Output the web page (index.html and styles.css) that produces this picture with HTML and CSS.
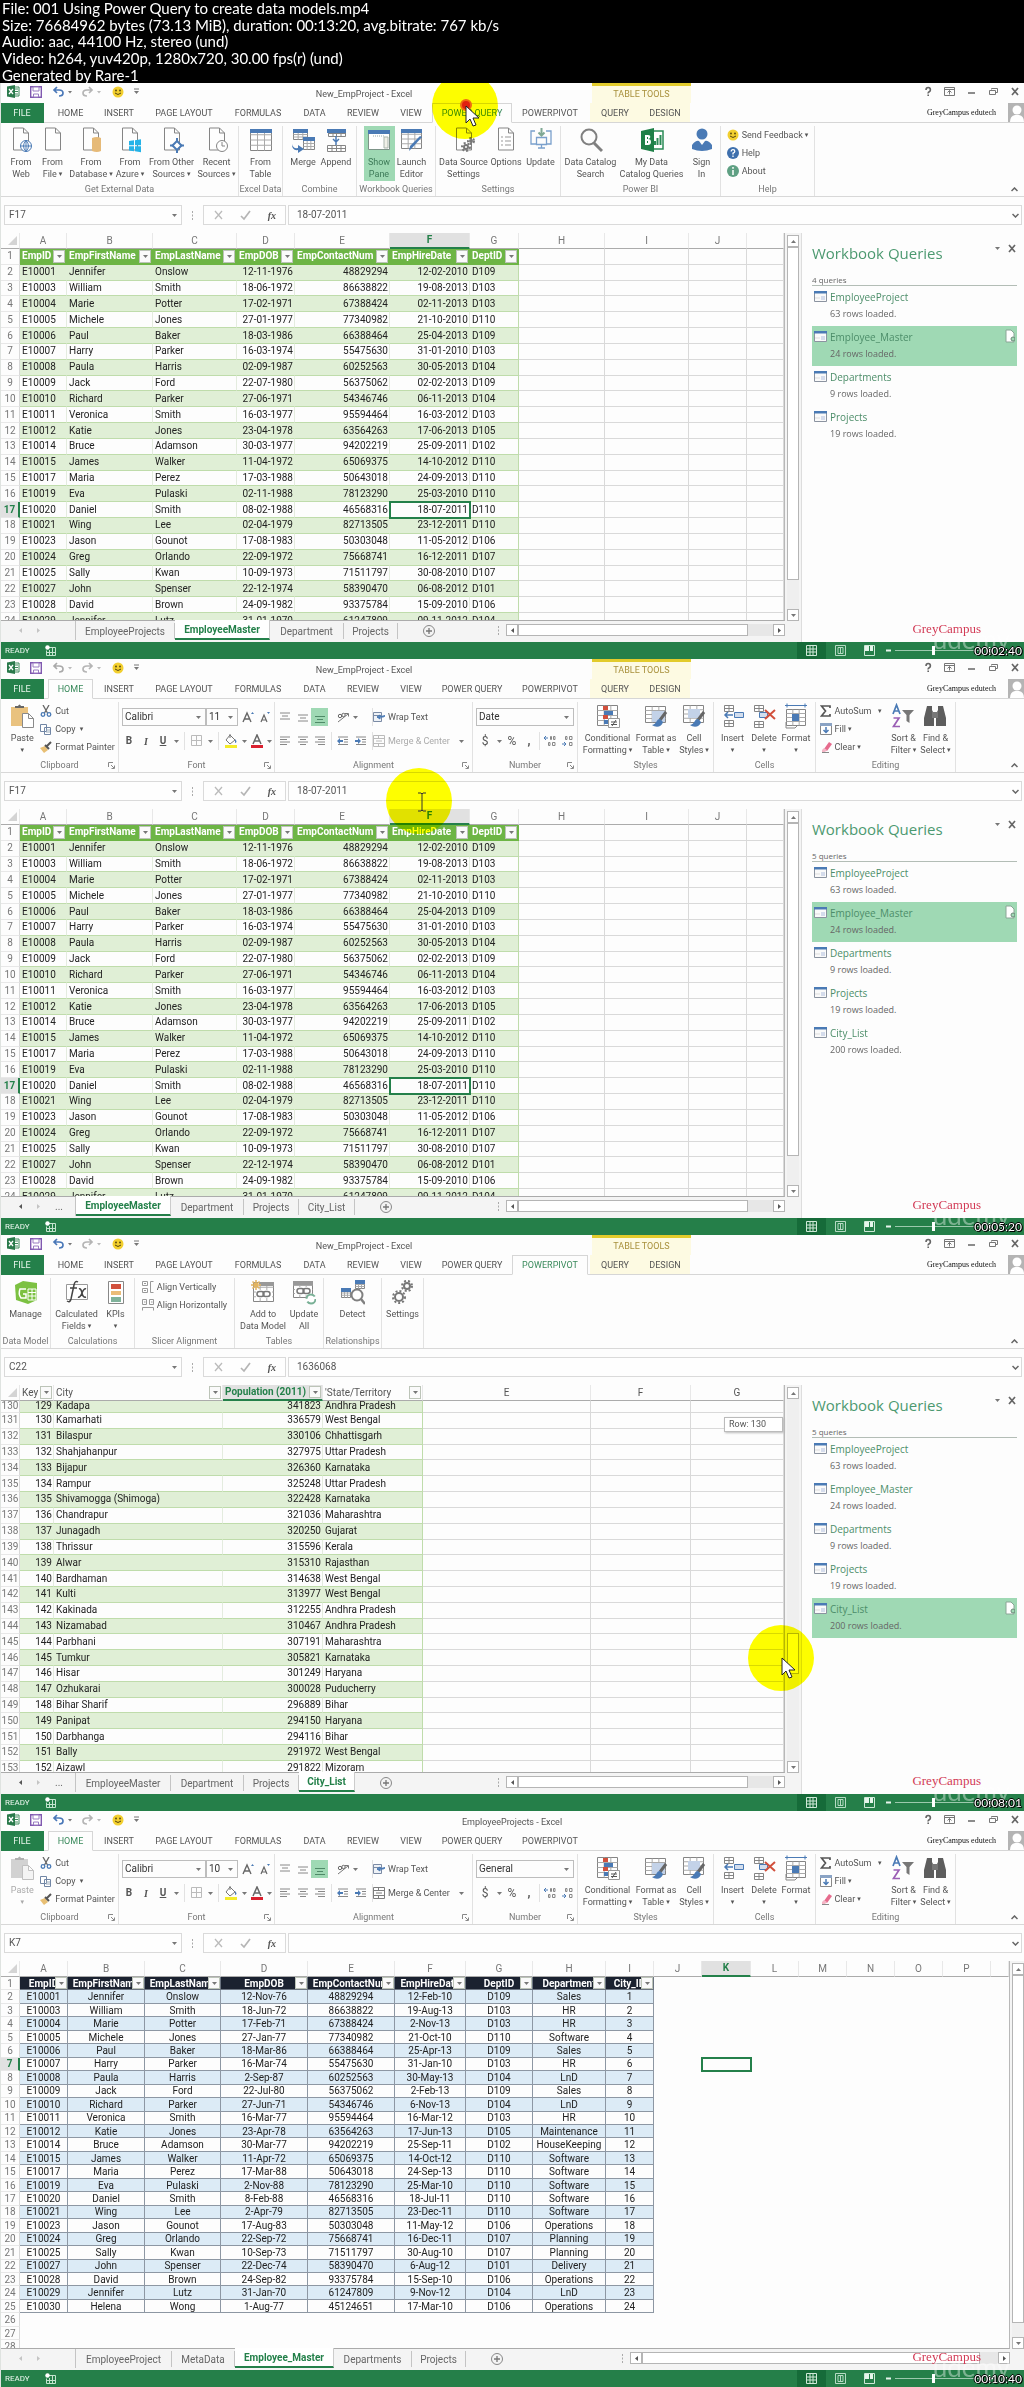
FILE: index.html
```html
<!DOCTYPE html>
<html lang="en">
<head>
<meta charset="utf-8">
<meta name="viewport" content="width=device-width, initial-scale=1">
<title>001 Using Power Query to create data models.mp4</title>
<link rel="stylesheet" href="styles.css">
</head>
<body>
<header class="file-info">
  <p>File: 001 Using Power Query to create data models.mp4</p>
  <p>Size: 76684962 bytes (73.13 MiB), duration: 00:13:20, avg.bitrate: 767 kb/s</p>
  <p>Audio: aac, 44100 Hz, stereo (und)</p>
  <p>Video: h264, yuv420p, 1280x720, 30.00 fps(r) (und)</p>
  <p>Generated by Rare-1</p>
</header>
<main id="frames"></main>
<script src="app.js"></script>
</body>
</html>
```
FILE: styles.css
```css
* { box-sizing: border-box; }
body {
  margin: 0;
  background: #fdfdfd;
  color: #555;
  font: 9px/12px Roboto, "Liberation Sans", sans-serif;
}
button, input, select { font: inherit; color: inherit; margin: 0; padding: 0; border: 0; background: none; }
p, h2, ul { margin: 0; padding: 0; }
ul { list-style: none; }
a { color: inherit; text-decoration: none; }
svg { display: block; flex: none; }

/* media summary */
.file-info {
  display: grid;
  grid-auto-rows: 1fr;
  align-items: center;
  min-height: 83px;
  padding-left: 2px;
  background: #000;
  color: #fff;
  font: 15px/16px Lato, sans-serif;
}

/* one captured window */
.frame { position: relative; overflow: hidden; border-left: 1px solid #dfe3e0; }

/* title row */
.titlebar { display: flex; height: 20px; }
.qat { display: flex; align-items: center; width: 135px; padding: 0 0 3px 6px; }
.qat .ico-xl { margin-right: 10px; }
.qat .ico-save { margin-right: 10px; }
.qat .undo { margin-right: 9px; }
.qat .smile { margin: 0 10px 0 11px; }
.qat button, .win button { display: flex; align-items: center; }
.doc-title { flex: 1; text-align: center; line-height: 22px; }
.tools-title {
  width: 99px; border-top: 3px solid #e2cb2c; background: #fdfae2; color: #a8903c;
  text-align: center; line-height: 17px;
}
.win { display: flex; justify-content: flex-end; align-items: center; gap: 11px; width: 333px; padding: 0 4px 3px 0; }
.no-tools .win { width: 136px; }

/* ribbon tabs */
.tabs { display: flex; height: 20px; border-bottom: 1px solid #d6d6d6; }
.tab { height: 20px; text-align: center; line-height: 20px; }
.tab.file { background: #24804a; color: #e8f5ec; margin-right: 4px; margin-left: -1px; }
.tab.active { border: 1px solid #d6d6d6; border-bottom-color: #fdfdfd; color: #3a8a5c; line-height: 18px; background: #fdfdfd; }
.tab.tool { background: #fdfae2; height: 19px; }
.tab.gap { margin-right: 2px; }
.user { display: flex; align-items: flex-start; margin-left: auto; gap: 12px; font: 8px/20px "Liberation Serif", serif; color: #111; }

/* ribbon body */
.ribbon { display: flex; position: relative; height: 74px; border-bottom: 1px solid #d8d8d8; }
.group { display: flex; flex-direction: column; border-right: 1px solid #e2e2e2; margin: 3px 0 0; }
.group-body { display: flex; flex: 1; justify-content: center; }
.group-name { position: relative; height: 13px; text-align: center; color: #777; white-space: nowrap; }
.group-name svg { position: absolute; right: 3px; bottom: 3px; }
.big { display: flex; flex-direction: column; align-items: center; white-space: nowrap; padding-top: 1px; height: 55px; }
.big svg { margin-bottom: 3px; }
.big span { display: block; }
.big.on { background: #9fd9b4; color: #3d7a58; }
.dd::after { content: "\25BE"; font: 7px/7px "DejaVu Sans", sans-serif; padding-left: 2px; vertical-align: 1px; }
.dd.only::after { padding: 0; }
.dim { color: #aaa; }
.list { display: flex; flex-direction: column; align-items: flex-start; }
.row { display: flex; align-items: center; height: 18px; gap: 3px; white-space: nowrap; }
.lines { display: flex; flex-direction: column; gap: 6px; padding-top: 6px; flex: 1; }
.tools { display: flex; align-items: center; height: 18px; white-space: nowrap; }
.tools > * { flex: none; display: flex; justify-content: center; align-items: center; }
.tools .hl { background: #9fd9b4; height: 18px; }
.tools .sep { align-self: stretch; border-left: 1px solid #e2e2e2; }
.tools .left { justify-content: flex-start; gap: 3px; }
.combo { position: relative; height: 18px; border: 1px solid #bdbdbd; }
.combo select { width: 100%; height: 16px; padding-left: 2px; appearance: none; color: #333; font-size: 10px; }
.combo svg { position: absolute; right: 4px; }
.collapse { position: absolute; right: 6px; bottom: 4px; }
.b { font-weight: 700; font-size: 10px; }
.i { font: italic 700 10px "Liberation Serif", serif; }
.u { font-weight: 700; font-size: 10px; text-decoration: underline; }
.money { font-size: 12px; }

/* formula bar */
.fbar { display: flex; align-items: center; height: 36px; padding: 8px 2px; font-size: 10px; }
.fbar > * { height: 20px; }
.box { display: flex; align-items: center; border: 1px solid #dadada; background: #fefefe; }
.namebox { width: 178px; padding: 0 4px; margin-left: 1px; }
.namebox input { flex: 1; min-width: 0; }
.grip { width: 21px; display: flex; justify-content: center; align-items: center; }
.fx { width: 83px; justify-content: space-between; padding: 0 9px; margin-right: 2px; }
.formula { flex: 1; padding: 0 2px 0 8px; }
.formula input { flex: 1; min-width: 0; }

/* worksheet area */
.work { display: flex; }
.sheet { flex: 1; min-width: 0; display: flex; flex-direction: column; }
.view { display: flex; height: 388px; }
.grid { flex: 1; min-width: 0; overflow: hidden; border-bottom: 1px solid #ababab; border-right: 1px solid #b8b8b8; }
table { table-layout: fixed; width: 100%; border-collapse: separate; border-spacing: 0; font-size: 10px; line-height: 12px; color: #222; }
table.std { height: 396px; }
table.city { height: 392px; }
table.blue { height: 393px; }
td, th { padding: 0 2px; overflow: hidden; white-space: nowrap; text-align: left; font-weight: 400; border-right: 1px solid #d9d9d9; border-bottom: 1px solid #d9d9d9; }
th { position: relative; }
thead tr { height: 16px; }
thead th { text-align: center; color: #777; border-right-color: #e8e8e8; border-bottom-color: #ababab; }
thead th.sel { background: #e1e1e1; color: #24804a; font-weight: 700; border-bottom: 2px solid #24804a; }
.corner svg { margin-left: auto; }
tbody th { text-align: center; color: #777; border-bottom-color: #e8e8e8; padding: 0; }
tbody th.sel { background: #e1e1e1; color: #24804a; font-weight: 700; border-right: 2px solid #24804a; }
td.num { text-align: right; padding-right: 1px; }
td.t { border-bottom-color: #bfdcab; border-right-color: #e4ecdf; }
td.t.last { border-right-color: #bfdcab; }
tr.band td.t { background: #e0efd6; border-right-color: #e0efd6; }
tr.band td.t.last { border-right-color: #bfdcab; }
td.t.head { position: relative; background: #6db545; color: #fff; font-weight: 700; border-color: #6db545; }
td.cell-on { outline: 2px solid #24804a; outline-offset: -1px; overflow: visible; position: relative; }
.filter {
  position: absolute; right: 1px; top: 1px; bottom: 1px; width: 12px;
  display: flex; align-items: center; justify-content: center;
  border: 1px solid #bcc4b8; background: #fafafa;
}
.city thead th { text-align: left; color: #555; }
.city thead th.mid { text-align: center; }
.city thead th.sel { color: #24804a; }
.city tr.cut { height: 12px; }
.city tr.cut td, .city tr.cut th { line-height: 9px; vertical-align: top; }
.blue td { border-color: transparent; line-height: 11px; }
.blue tbody th { line-height: 11px; }
.blue td.t { text-align: center; border-color: #8d97a3; }
.blue tr.band td.t { background: #dcebf6; border-color: #8d97a3; }
.blue td.t.head { background: #1b2230; border-color: #6b7480; }
.blue .filter { right: 0; top: 0; bottom: 0; }
.tip { position: absolute; left: 723px; top: 182px; width: 59px; height: 15px; border: 1px solid #bbb; background: #fff; box-shadow: 1px 1px 2px #bbb; padding-left: 4px; line-height: 13px; }

.vscroll { display: flex; flex-direction: column; width: 16px; padding: 2px 2px 0; background: #f4f4f4; }
.no-pane .vscroll { width: 14px; padding: 2px 0 0 2px; }
.vscroll button, .hscroll button { display: flex; align-items: center; justify-content: center; width: 12px; height: 12px; border: 1px solid #b5b5b5; background: #fff; }
.vtrack { flex: 1; display: flex; flex-direction: column; background: #efefef; }
.vthumb { border: 1px solid #b5b5b5; background: #fff; height: 333px; }
.low .vthumb { margin-top: 234px; height: 41px; }
.no-pane .vthumb { height: 348px; }

/* sheet tabs */
.sheetbar { display: flex; align-items: flex-start; height: 21px; background: #f4f4f4; font-size: 10px; color: #666; }
.nav { display: flex; align-items: center; width: 75px; height: 19px; padding-left: 18px; gap: 15px; border-right: 1px solid #c4c4c4; }
.nav span { line-height: 10px; }
.stab { height: 16px; margin-top: 2px; text-align: center; line-height: 15px; border-right: 1px solid #c4c4c4; white-space: nowrap; }
.stab.on { height: 20px; margin-top: -1px; line-height: 19px; background: #fff; color: #24804a; font-weight: 700; border-right-color: #ccc; border-bottom: 2px solid #24804a; }
.plus { margin: 3px 0 0 24px; }
.hscroll { display: flex; align-items: center; width: 310px; margin-left: auto; padding: 3px 16px 0 0; }
.hscroll .grip { width: 15px; }
.htrack { flex: 1; background: #e7e7e7; }
.hthumb { display: block; width: 90%; height: 12px; border: 1px solid #b5b5b5; background: #fff; }
.no-pane .hscroll { width: 409px; padding-right: 14px; }
.no-pane .hthumb { width: 95%; }

/* query pane */
.pane { width: 223px; padding: 10px 7px 0 10px; border-left: 1px solid #ddd; background: #fdfdfd; font-family: "Open Sans", sans-serif; }
.pane-head { display: flex; align-items: flex-start; justify-content: space-between; }
.pane-head h2 { font: 400 15px/20px "Open Sans", sans-serif; color: #4c9970; }
.pane-head div { display: flex; gap: 7px; padding: 1px 0 0; align-items: center; }
.pane .count { margin-top: 11px; border-bottom: 1px solid #b3bdb6; line-height: 11px; font-size: 8px; color: #666; }
.query { display: flex; gap: 3px; height: 40px; padding: 3px 2px 0; }
.query.on { background: #9fd9b4; }
.query .txt { flex: 1; }
.query a { display: block; font-size: 10px; line-height: 16px; color: #4c8d69; }
.query p { font-size: 9px; line-height: 18px; color: #666; }
.query svg { margin-top: 2px; }
.query .peek { margin-top: 0; }

/* status bar */
.status { display: flex; align-items: center; height: 17px; margin-left: -1px; padding-left: 5px; background: #257f49; color: #eef8f1; font-size: 8px; }
.status .rec { margin-left: 15px; }
.views { display: flex; align-items: center; margin-left: auto; height: 17px; }
.views button { display: flex; align-items: center; justify-content: center; width: 29px; height: 17px; }
.views button.on { background: #166b39; }
.zoom { display: flex; align-items: center; gap: 3px; margin: 0 31px 0 2px; }
.zoom input { appearance: none; width: 88px; height: 10px; }
.zoom input::-webkit-slider-runnable-track { height: 1px; background: #9cc9ad; }
.zoom input::-webkit-slider-thumb { appearance: none; width: 3px; height: 9px; margin-top: -4px; background: #fff; }

/* overlays on the captured picture */
.brand { position: absolute; right: 43px; bottom: 22px; font: 13px/16px "Liberation Serif", serif; color: #d23a55; }
.mark { position: absolute; right: 14px; bottom: 4px; font: 26px/32px Lato, sans-serif; color: rgba(255,255,255,.4); }
.time { position: absolute; right: 2px; bottom: 1px; font: 12px/14px Lato, sans-serif; color: #fff; text-shadow: 1px 1px 0 #000, -1px 0 0 #000, 0 -1px 0 #000, 1px 0 0 #000; }
.spot { position: absolute; width: 66px; height: 66px; border-radius: 50%; background: #ff0; mix-blend-mode: multiply; }
.pointer { position: absolute; }
.spot.s1 { left: 431px; top: -10px; }
.pointer.s1 { left: 457px; top: 15px; }
.spot.s2 { left: 385px; top: 109px; }
.pointer.s2 { left: 416px; top: 133px; }
.spot.s3 { left: 747px; top: 390px; }
.pointer.s3 { left: 773px; top: 415px; }
```
FILE: app.js
```js
// Icon drawings: [width, height, viewBox, markup]
const G = '#858585', B = '#4a7ab5';
const doc = `<path d="M4.500 1h10l5 5v17h-15zM14.500 1v5h5" fill="#fefefe" stroke="${G}"/>`;
const table = (x, y, w, h) => `<path d="M${x} ${y}h${w}v${h}h-${w}z" fill="#fff" stroke="${G}"/><path d="M${x} ${y + h / 4}h${w}M${x} ${y + h / 2}h${w}M${x} ${y + h * 3 / 4}h${w}M${x + w / 3} ${y}v${h}M${x + w * 2 / 3} ${y}v${h}" stroke="#aaa"/>`;
const cap = (x, y, w) => `<path d="M${x} ${y}h${w}v4h-${w}z" fill="${B}"/>`;
const box = (x, y) => `<path d="M${x} ${y}h9v6h-9zM${x} ${y + 3}h9M${x + 4.5} ${y}v6" fill="#fff" stroke="${G}"/>`;
const bars = (c, a) => a.map(([x, w], i) => `<path d="M${x} ${2 + i * 3}h${w}" stroke="${c}"/>`).join('');
const big = s => [24, 26, '0 0 24 26', s], small = s => [12, 12, '0 0 12 12', s];
const smiley = '<circle cx="6" cy="6" r="5.500" fill="#f2cf2f"/><circle cx="4" cy="4.500" r=".9" fill="#54430e"/><circle cx="8" cy="4.500" r=".9" fill="#54430e"/><path d="M3 7q3 3 6 0" fill="none" stroke="#54430e"/>';
const brush = `<path d="M22 9l-6 8" stroke="#666" stroke-width="3"/><path d="M16 16c-4 0-3 5-8 6 4 3 10 2 11-3z" fill="${B}"/>`;
const gear = (x, y, r) => `<circle cx="${x}" cy="${y}" r="${r}" fill="none" stroke="#777" stroke-width="2"/><circle cx="${x}" cy="${y}" r="${r + 2}" fill="none" stroke="#777" stroke-width="2" stroke-dasharray="2 2"/>`;
const ICON = {
  xl: [13, 13, '0 0 13 13', '<path d="M6 2h6v9H6z" fill="#fff" stroke="#3c8a5a"/><path d="M8 4h3M8 6.500h3M8 9h3" stroke="#3c8a5a"/><path d="M0 1.500L8 0v13L0 11.500z" fill="#2a7a4b"/><path d="M2 4l4 5M6 4L2 9" stroke="#fff" stroke-width="1.300"/>'],
  save: [12, 12, '0 0 12 12', '<path d="M.7.7h10.600v10.600H.7z" fill="#fff" stroke="#8059b0" stroke-width="1.400"/><path d="M3 1h6v4H3zM3.500 8h5v3h-5z" fill="#fff" stroke="#9a7cc2"/>'],
  undo: [20, 12, '0 0 20 12', '<path d="M5 1L2 4l3 3M2 4h5q4 0 4 3t-4 3" fill="none" stroke="#4a78b8" stroke-width="1.700"/><path d="M16 5h4l-2 2.500z" fill="#777"/>'],
  undoOff: [20, 12, '0 0 20 12', '<path d="M5 1L2 4l3 3M2 4h5q4 0 4 3t-4 3" fill="none" stroke="#aaa" stroke-width="1.700"/><path d="M16 5h4l-2 2.500z" fill="#bbb"/>'],
  redo: [20, 12, '0 0 20 12', '<path d="M8 1l3 3-3 3M11 4H6Q2 4 2 7t4 3" fill="none" stroke="#b5b5b5" stroke-width="1.700"/><path d="M16 5h4l-2 2.500z" fill="#bbb"/>'],
  smile: small(smiley),
  more: [5, 7, '0 0 5 7', '<path d="M0 1h5" stroke="#777"/><path d="M0 3h5L2.500 6z" fill="#777"/>'],
  help: [10, 11, '0 0 10 11', '<path d="M3 4q0-2.500 2.200-2.500T7.400 4q0 1.200-1.200 1.800T5.200 7.500M5.200 8.500v1.500" fill="none" stroke="#666" stroke-width="1.600"/>'],
  full: [11, 9, '0 0 11 9', '<path d="M.5.5h10v8H.5zM.5 2.500h10M5.500 7.500v-4M3.500 5.500l2-2 2 2" fill="none" stroke="#777"/>'],
  min: [11, 9, '0 0 11 9', '<path d="M2 6h7" stroke="#666" stroke-width="1.500"/>'],
  max: [11, 9, '0 0 11 9', '<path d="M3.500 2.500v-1h6v4h-2M1.500 3.500h6v4h-6z" fill="none" stroke="#777"/>'],
  close: [10, 9, '0 0 10 9', '<path d="M2 1l6 7M8 1L2 8" stroke="#666" stroke-width="1.700"/>'],
  avatar: [16, 19, '0 0 16 19', '<path d="M0 0h16v19H0z" fill="#b4b4b4"/><circle cx="9" cy="7" r="4.500" fill="#fff"/><path d="M2 19q0-6 5-7h4q5 1 5 7z" fill="#fff"/>'],
  caret: [5, 3, '0 0 5 3', '<path d="M0 0h5L2.500 3z" fill="#777"/>'],
  caretUp: [5, 3, '0 0 5 3', '<path d="M0 3h5L2.500 0z" fill="#777"/>'],
  left: [3, 5, '0 0 3 5', '<path d="M3 0v5L0 2.500z" fill="#555"/>'],
  right: [3, 5, '0 0 3 5', '<path d="M0 0v5l3-2.500z" fill="#555"/>'],
  leftOff: [3, 5, '0 0 3 5', '<path d="M3 0v5L0 2.500z" fill="#c4c4c4"/>'],
  rightOff: [3, 5, '0 0 3 5', '<path d="M0 0v5l3-2.500z" fill="#c4c4c4"/>'],
  up: [7, 5, '0 0 7 5', '<path d="M.5 4l3-3 3 3" fill="none" stroke="#666" stroke-width="1.500"/>'],
  down: [7, 5, '0 0 7 5', '<path d="M.5 1l3 3 3-3" fill="none" stroke="#666" stroke-width="1.500"/>'],
  launch: [7, 7, '0 0 7 7', '<path d="M.5 5V.5H5M3 3l3 3M6.500 3.500v3h-3" fill="none" stroke="#888"/>'],
  dots: [2, 9, '0 0 2 9', '<path d="M0 0h1v2H0zM0 3.500h1v2H0zM0 7h1v2H0z" fill="#aaa"/>'],
  cancel: small('<path d="M2 2l7 8M9 2L2 10" stroke="#bbb" stroke-width="1.300"/>'),
  check: small('<path d="M1 7l3 3 6-8" fill="none" stroke="#b5b5b5" stroke-width="1.700"/>'),
  corner: [9, 9, '0 0 9 9', '<path d="M9 0v9H0z" fill="#d4d4d4"/>'],
  add: [14, 14, '0 0 14 14', '<circle cx="7" cy="7" r="5.500" fill="none" stroke="#888"/><path d="M4 7h6M7 4v6" stroke="#777" stroke-width="1.300"/>'],
  rec: [11, 12, '0 0 11 12', '<path d="M3.500 2.500h7v8h-9v-5M1.500 7.500h9M4.500 5v5M7.500 3v7" fill="none" stroke="#c4e4cf"/><circle cx="2.500" cy="2.500" r="2.200" fill="#fff"/>'],
  vGrid: [11, 11, '0 0 11 11', '<path d="M.5.5h10v10H.5zM.5 4h10M.5 7h10M4 .5v10M7 .5v10" fill="none" stroke="#cfe9d8"/>'],
  vPage: [11, 11, '0 0 11 11', '<path d="M.5.5h10v10H.5zM3 2.500h5v6H3zM5.500 2.500v6" fill="none" stroke="#b5dac3"/>'],
  vBreak: [11, 11, '0 0 11 11', '<path d="M.5.5h10v10H.5z" fill="none" stroke="#cfe9d8"/><path d="M1 1h4v5H1zM6 1h3v5H6z" fill="#e5f5eb"/>'],
  minus: [6, 3, '0 0 6 3', '<path d="M0 1.500h5" stroke="#e8f5ec" stroke-width="2"/>'],
  plus: [7, 7, '0 0 7 7', '<path d="M0 3.500h7M3.500 0v7" stroke="#fff" stroke-width="1.500"/>'],
  query: [13, 12, '0 0 13 12', `<path d="M.5 1.500h12v9H.5z" fill="#fafafa" stroke="#8b93a0"/><path d="M0 0h13v2.500H0z" fill="${B}"/><path d="M7 5h4v4H7z" fill="#d5dcec"/><path d="M1 7h5" stroke="#ddd"/>`],
  peek: [10, 14, '0 0 10 14', '<path d="M1 1h5l3 3v9H1z" fill="#fff" stroke="#8aa596"/><circle cx="8" cy="10" r="2" fill="#9fd9b4" stroke="#6d8a7a"/>'],
  // Power Query ribbon
  web: big(doc + `<circle cx="17" cy="19" r="5.500" fill="#fff" stroke="${B}"/><path d="M11.500 19h11M17 13.500v11M17 13.500q-5 5.500 0 11q5-5.500 0-11" fill="none" stroke="${B}"/>`),
  file: big(doc),
  database: big(doc + '<path d="M13 11q5-2 9 0v13q-4 2-9 0z" fill="#e6ba78"/>'),
  azure: big(doc + '<path d="M11 14l5-.7v5h-5zM17 13.200l6-1v6h-6zM11 19.200h5v5l-5-.7zM17 19.200h6v6l-6-1z" fill="#25b3e8"/>'),
  other: big(doc + `<path d="M17 14l4.500 4.500L17 23l-4.500-4.500z" fill="#fff" stroke="${B}" stroke-width="2"/><path d="M17 11v4M17 22v4M10 18.500h4M20 18.500h4" stroke="${B}" stroke-width="2"/>`),
  recent: big(doc + `<circle cx="17" cy="19" r="5.500" fill="#fff" stroke="${G}"/><path d="M17 15v4h3" fill="none" stroke="${G}"/>`),
  table: big(table(1.5, 2.5, 21, 21) + cap(1, 2, 22)),
  merge: big(table(2.5, 2.5, 14, 10) + cap(2, 2, 15) + table(12.5, 10.5, 11, 12) + cap(12, 10, 12) + `<path d="M1 17q1 5 6 4v-3l6 4-6 4v-3q-6 1-6-6z" fill="${B}"/>`),
  append: big(box(4.5, 3.5) + box(12.5, 3.5) + cap(3, 2, 19) + `<path d="M12 9v9M9 12l3 3 3-3" fill="none" stroke="${B}" stroke-width="1.500"/>` + box(3.5, 18.5) + box(12.5, 18.5)),
  pane: big(`<path d="M1.500 3.500h21v19h-21z" fill="#fff" stroke="#7d9488"/>` + cap(1, 3, 22) + '<path d="M17 10h4v11h-4z" fill="#f0f0e8" stroke="#a9b5ad"/><path d="M6 9h12" stroke="#9aa" stroke-dasharray="1 1"/>'),
  editor: big(table(1.5, 2.5, 20, 19) + cap(1, 2, 21) + `<path d="M22 10L12 21l-3 3 1-5 10-10z" fill="${B}"/>`),
  source: big(doc + gear(14, 20, 2) + gear(19, 14, 1)),
  options: big(doc + '<path d="M7 10h2M11 10h6M7 14h2M11 14h6M7 18h2M11 18h6" stroke="#999"/>'),
  update: big(`<path d="M6 4H2v13h5M17 4h5v13h-5M7.500 10.500h10v7h-10zM9 21h7M12.500 18v3" fill="none" stroke="#7aa0cc" stroke-width="1.300"/><path d="M12.500 1v7M9.500 5.500l3 3 3-3" fill="none" stroke="#7fa894" stroke-width="2"/>`),
  search: big('<circle cx="10" cy="10" r="7.500" fill="none" stroke="#808080" stroke-width="2"/><path d="M15 16l8 8" stroke="#808080" stroke-width="3"/>'),
  bi: big('<path d="M12 4h11v18H12z" fill="#fff" stroke="#2a8a55" stroke-width="1.500"/><path d="M15 18v-4M17.500 18v-7M20.500 18V8" stroke="#2a8a55" stroke-width="2"/><path d="M1 4l13-3v24L1 22z" fill="#1f8048"/><path d="M5 8h3q3 0 2 3-1 1-2 1 3 0 3 3t-3 3H5zM7 10v2h1v-2zM7 14v2h1v-2z" fill="#fff"/>'),
  sign: big(`<circle cx="12" cy="7" r="5.500" fill="${B}"/><path d="M2 18q4-5 7-4l3 4 3-4q3-1 7 4v4q-10 4-20 0z" fill="${B}"/>`),
  helpBlue: small(`<circle cx="6" cy="6" r="6" fill="#3f70ad"/><path d="M4.200 4.500q0-1.800 1.800-1.800t1.800 1.600Q7.800 5.500 6 6.200V7.500M6 8.500V10" fill="none" stroke="#fff" stroke-width="1.300"/>`),
  about: small('<circle cx="6" cy="6" r="6" fill="#5fa083"/><path d="M6 2v1.700M6 5v5" stroke="#fff" stroke-width="1.500"/>'),
  // Home ribbon
  paste: big('<path d="M1 4h17v19H1z" fill="#e9c27f"/><path d="M5 5V3h3q1.500-3 3 0h3v2z" fill="#666"/><path d="M12.500 10.500h6l5 5v9h-11zM18.500 10.500v5h5" fill="#fff" stroke="#8a8a8a"/>'),
  pasteOff: big('<path d="M1 4h17v19H1z" fill="#d2d2d2"/><path d="M5 5V3h3q1.500-3 3 0h3v2z" fill="#b0b0b0"/><path d="M12.500 10.500h6l5 5v9h-11zM18.500 10.500v5h5" fill="#f4f4f4" stroke="#c0c0c0"/>'),
  cut: small(`<path d="M3 0l4.500 8M9 0L4.500 8" stroke="#666" stroke-width="1.300"/><circle cx="3" cy="9.500" r="1.800" fill="none" stroke="${B}" stroke-width="1.300"/><circle cx="9" cy="9.500" r="1.800" fill="none" stroke="${B}" stroke-width="1.300"/>`),
  copy: small('<path d="M.5 1.500h6v7h-6zM4.500 4.500h6v7h-6z" fill="#fff" stroke="#7186a5"/><path d="M6 7h4M6 9h4" stroke="#9ab"/>'),
  painter: small('<path d="M0 7l5-2 3 4-4 3z" fill="#e8bf74"/><path d="M5 4l4 4M7 5l4-4" stroke="#555" stroke-width="2"/>'),
  bigA: [14, 14, '0 0 14 14', '<path d="M2 12L6 3l4 9M3.500 9h5" fill="none" stroke="#666" stroke-width="1.400"/><path d="M10 4l1.500-2L13 4z" fill="#4a7ab5"/>'],
  smallA: [14, 14, '0 0 14 14', '<path d="M3 12l3-7 3 7M4 10h4" fill="none" stroke="#666" stroke-width="1.200"/><path d="M9 2h3l-1.500 2z" fill="#4a7ab5"/>'],
  border: small('<path d="M.5.5h10v10H.5zM5.500.5v10M.5 5.500h10" fill="none" stroke="#bbb"/>'),
  fill: [14, 14, '0 0 14 14', '<path d="M6 1l5 5-5 4-4-4zM6 0v4" fill="#fff" stroke="#777"/><path d="M11 5q3 3 0 4z" fill="#4a7ab5"/><path d="M1 11h12v3H1z" fill="#f4ec2a"/>'],
  fontA: [14, 14, '0 0 14 14', '<path d="M3 10L7 1l4 9M4.500 7h5" fill="none" stroke="#666" stroke-width="1.500"/><path d="M1 11h12v3H1z" fill="#d9202f"/>'],
  top: small(bars('#888', [[1, 10], [3, 6], [1, 10]])),
  mid: small('<path d="M1 4h10M3 7h6M1 10h10" stroke="#888"/>'),
  bot: small('<path d="M1 5.500h10M3 8.500h6M1 11.500h10" stroke="#4f8a68"/>'),
  orient: small('<path d="M1 11L11 3M8 2.500h3.500v3" stroke="#777" fill="none"/><circle cx="3" cy="5" r="1.700" fill="none" stroke="#666"/><circle cx="6.500" cy="4" r="1.700" fill="none" stroke="#666"/>'),
  al: small('<path d="M1 2h10M1 4.500h7M1 7h10M1 9.500h7" stroke="#888"/>'),
  ac: small('<path d="M1 2h10M3 4.500h6M1 7h10M3 9.500h6" stroke="#888"/>'),
  ar: small('<path d="M1 2h10M4 4.500h7M1 7h10M4 9.500h7" stroke="#888"/>'),
  outdent: small(`<path d="M1 2h10M7 4.500h4M7 7h4M1 9.500h10" stroke="#888"/><path d="M0 6l3-3v2h3v2H3v2z" fill="${B}"/>`),
  indent: small(`<path d="M1 2h10M7 4.500h4M7 7h4M1 9.500h10" stroke="#888"/><path d="M6 6L3 3v2H0v2h3v2z" fill="${B}"/>`),
  wrap: small(`<path d="M.5 1.500h8v9h-8zM.5 4.500h8" fill="#eef2f7" stroke="#7b8ba5"/><path d="M4 6h6q2 0 2-2M7 4v4L4 6z" fill="${B}" stroke="${B}"/>`),
  mergeC: small('<path d="M.5.5h11v11H.5zM.5 3.500h11M.5 8.500h11M5.500.5v3M5.500 8.500v3M3 6h6" fill="none" stroke="#7d7d7d"/>'),
  mergeOff: small('<path d="M.5.5h11v11H.5zM.5 3.500h11M.5 8.500h11M5.500.5v3M5.500 8.500v3M3 6h6" fill="none" stroke="#bbb"/>'),
  decUp: small(`<path d="M0 3h4M2 1L0 3l2 2" fill="none" stroke="${B}"/><path d="M6.500 1.500h1v3h-1zM9.500 1.500h1.500v3H9.500zM4.500 7.500H6v3H4.500zM8.500 7.500H11v3H8.500z" fill="none" stroke="#888"/>`),
  decDown: small(`<path d="M1 9h4M3 7l2 2-2 2" fill="none" stroke="${B}"/><path d="M4.500 1.500H6v3H4.500zM8.500 1.500H11v3H8.500zM8.500 7.500H11v3H8.500z" fill="none" stroke="#888"/>`),
  cond: big(table(1.5, 2.5, 20, 20) + `<path d="M7 3h5v4H7zM7 12h5v4H7z" fill="#d1503c"/><path d="M8 8h9v4H8zM8 17h4v4H8z" fill="${B}"/><path d="M12.500 15.500h11v9h-11z" fill="#fff" stroke="#999"/><path d="M15 19h6M15 21.500h6M20 17l-4 6" stroke="#555"/>`),
  fmtTable: big(table(1.5, 3.5, 20, 16) + '<path d="M8 8h13v11H8z" fill="#c3d2e8"/>' + brush),
  cell: big(table(1.5, 2.5, 20, 17) + '<path d="M6 6h12v9H6z" fill="#c3d2e8"/>' + brush),
  insert: big(box(3.5, 2.5) + box(3.5, 17.5) + `<path d="M13.500 9.500h9v5h-9z" fill="#d3deee" stroke="${B}"/><path d="M12 12H4M7 9l-3 3 3 3" fill="none" stroke="${B}" stroke-width="1.500"/>`),
  del: big(box(2.5, 2.5) + box(2.5, 18.5) + `<path d="M7.500 9.500h8v5h-8z" fill="#d3deee" stroke="${B}"/><path d="M13 7l10 9M23 7l-10 9" stroke="#d1503c" stroke-width="2"/>`),
  format: big(table(2.5, 6.5, 19, 16) + `<path d="M8 11h7v7H8z" fill="${B}"/><path d="M1 2.500h22M3 .5v4M21 .5v4" stroke="${B}"/><path d="M2 19v6h9l3-3" fill="none" stroke="#888"/>`),
  sum: small('<path d="M10 3V1H1.500l4 5-4 5H10V9" fill="none" stroke="#555" stroke-width="1.700"/>'),
  down2: small(`<path d="M.5.5h11v11H.5z" fill="#fff" stroke="#888"/><path d="M0 0h12v3H0z" fill="#8aa3c4"/><path d="M6 4v5M3.500 7L6 9.500 8.500 7" fill="none" stroke="${B}" stroke-width="1.500"/>`),
  erase: small('<path d="M4 8l5-7 3 2-5 7z" fill="#e66b8d"/><path d="M2 9l2-2 3 2-2 2H2z" fill="#f3b6c6"/><path d="M2 11.500h7" stroke="#888"/>'),
  sort: big(`<path d="M2 11l3.500-9L9 11M3.500 8h4.500" fill="none" stroke="${B}" stroke-width="1.700"/><path d="M2.500 15H8l-5.500 8.500H9" fill="none" stroke="#9b5fb5" stroke-width="1.700"/><path d="M11 7h12l-4.500 5v8l-3-2v-6z" fill="#777"/>`),
  find: big('<path d="M4 3h5v4l2 4v12H1v-8zM15 3h5l3 12v8H13V11l2-4z" fill="#5d5d5d"/><path d="M9 9h6v6H9z" fill="#777"/>'),
  // PowerPivot ribbon
  manage: big('<path d="M1 6l8-4 14 2v17l-9 4-12-4z" fill="#7cc142"/><path d="M12 10H6q-2 5 1 9h5v-4H9" fill="none" stroke="#fff" stroke-width="1.500"/><path d="M14 10h8v11h-8zM14 13.500h8M14 17h8M18 10v11" fill="#7cc142" stroke="#fff"/>'),
  calc: big('<path d="M1.500 5.500h21v15h-21z" fill="#fff" stroke="#999"/><path d="M13 3q-3-2-4 3L6 20q-1 4-4 2M5 9h7M14 10q2-1 3 4t4 4M21 10q-2-1-4 4t-4 4" fill="none" stroke="#444" stroke-width="1.500"/>'),
  kpi: big('<path d="M4.500 2.500h15v22h-15z" fill="#fff" stroke="#888"/><path d="M7 5h10v5H7z" fill="#d1503c"/><path d="M7 12h10v4H7z" fill="#eabc78"/><path d="M7 18h10v5H7z" fill="#7fb29a"/>'),
  alignV: small('<path d="M.5.5h5v4h-5zM.5 7.500h5v4h-5zM2 2.500h2M2 9.500h2M11.500.5h-3v11h3" fill="none" stroke="#999"/>'),
  alignH: small('<path d="M.5.5h4v5h-4zM7.500.5h4v5h-4zM2 3h1.500M9 3h1.500M.5 11.500v-3h11v3" fill="none" stroke="#999"/>'),
  addModel: big(table(2.5, 3.5, 20, 19) + cap(8, 3, 15).replace(B, '#999') + '<path d="M0 6h10M5 1v10M1.500 2.500l7 7M8.500 2.500l-7 7" stroke="#e3b45e" stroke-width="1.500"/><path d="M5 11h16v8H5z" fill="#fff"/><rect x="6" y="12.500" width="7" height="5" rx="2.500" fill="none" stroke="#777" stroke-width="1.500"/><rect x="12" y="12.500" width="7" height="5" rx="2.500" fill="none" stroke="#777" stroke-width="1.500"/>'),
  updAll: big(table(1.5, 2.5, 19, 16) + cap(1, 2, 20).replace(B, '#999') + '<path d="M3 8h17v8H3z" fill="#fff"/><rect x="5" y="9.500" width="7" height="5" rx="2.500" fill="none" stroke="#777" stroke-width="1.500"/><rect x="11" y="9.500" width="7" height="5" rx="2.500" fill="none" stroke="#777" stroke-width="1.500"/><circle cx="19" cy="20" r="4.500" fill="#fff" stroke="#79b096" stroke-width="2" stroke-dasharray="11 3"/>'),
  detect: big(table(.5, 9.5, 9, 9) + cap(0, 9, 10) + table(14.5, 1.5, 9, 8) + cap(14, 1, 10) + '<circle cx="16" cy="16" r="5.500" fill="#fff" stroke="#808080" stroke-width="2"/><path d="M20 20l4 5" stroke="#808080" stroke-width="2.500"/>'),
  settings: big(gear(16, 7, 3) + gear(8, 18, 4)),
  // pointers
  click: [24, 30, '0 0 24 30', '<circle cx="8" cy="7" r="6" fill="#f06a12"/><circle cx="8" cy="7" r="4" fill="#e02010"/><path d="M8 8v17l4-4 3 7 3-1-3-7h6z" fill="#fff" stroke="#222"/>'],
  beam: [10, 20, '0 0 10 20', '<path d="M1 1h3l1 1 1-1h3M1 19h3l1-1 1 1h3M5 2v16" fill="none" stroke="#333"/>'],
  arrow: [24, 30, '0 0 24 30', '<path d="M8 8v17l4-4 3 7 3-1-3-7h6z" fill="#fff" stroke="#222"/>']
};
const ic = (n, cls = '') => {
  const [w, h, vb, s] = ICON[n];
  return `<svg class="${cls}" width="${w}" height="${h}" viewBox="${vb}" aria-hidden="true">${s}</svg>`;
};

// Ribbon building blocks
const bigBtn = (icon, w, l1, l2 = '', cls = '') => {
  const arrow = l2.endsWith('~');
  const text = l2.replace('~', '');
  return `<button class="big ${cls}" style="width:${w}px">${ic(icon)}<span>${l1}</span>${l2 ? `<span class="${arrow ? 'dd' : ''} ${text ? '' : 'only'}">${text}</span>` : ''}</button>`;
};
const group = (w, name, body, launch) => `<section class="group" style="width:${w}px"><div class="group-body">${body}</div><div class="group-name">${name}${launch ? ic('launch') : ''}</div></section>`;
const line = (icon, text, arrow) => `<button class="row">${ic(icon)}<span class="${arrow ? 'dd' : ''}">${text}</span></button>`;
const tool = (w, inner, cls = '') => `<button class="${cls}" style="width:${w}px">${inner}</button>`;
const sep = w => `<span style="width:${w}px"></span><span class="sep"></span>`;
const combo = (w, label, value) => `<span class="combo" style="width:${w}px"><select aria-label="${label}"><option>${value}</option></select>${ic('caret')}</span>`;
const c = ic('caret');

const powerQuery = () =>
  group(238, 'Get External Data', bigBtn('web', 34, 'From', 'Web') + bigBtn('file', 29, 'From', 'File~') + bigBtn('database', 48, 'From', 'Database~') + bigBtn('azure', 30, 'From', 'Azure~') + bigBtn('other', 53, 'From Other', 'Sources~') + bigBtn('recent', 37, 'Recent', 'Sources~')) +
  group(44, 'Excel Data', bigBtn('table', 42, 'From', 'Table')) +
  group(74, 'Combine', bigBtn('merge', 33, 'Merge') + bigBtn('append', 33, 'Append')) +
  group(79, 'Workbook Queries', bigBtn('pane', 31, 'Show', 'Pane', 'on') + bigBtn('editor', 34, 'Launch', 'Editor')) +
  group(125, 'Settings', bigBtn('source', 52, 'Data Source', 'Settings') + bigBtn('options', 33, 'Options') + bigBtn('update', 36, 'Update')) +
  group(160, 'Power BI', bigBtn('search', 54, 'Data Catalog', 'Search') + bigBtn('bi', 68, 'My Data', 'Catalog Queries') + bigBtn('sign', 32, 'Sign', 'In')) +
  group(94, 'Help', `<div class="list">${line('smile', 'Send Feedback', 1)}${line('helpBlue', 'Help')}${line('about', 'About')}</div>`);

const home = f =>
  group(118, 'Clipboard', bigBtn(f.paste ? 'paste' : 'pasteOff', 36, 'Paste', '~', f.paste ? '' : 'dim') + `<div class="list">${line('cut', 'Cut')}${line('copy', 'Copy&nbsp;', 1)}${line('painter', 'Format Painter')}</div>`, 1) +
  group(156, 'Font', `<div class="lines"><div class="tools"><span style="width:3px"></span>${combo(84, 'Font', 'Calibri')}${combo(32, 'Font size', f.size)}${tool(19, ic('bigA'))}${tool(16, ic('smallA'))}</div>
    <div class="tools">${tool(20, 'B', 'b')}${tool(14, 'I', 'i')}${tool(20, 'U', 'u')}${tool(7, c)}${sep(4)}${tool(23, ic('border'))}${tool(4, c)}${sep(6)}${tool(23, ic('fill'))}${tool(4, c)}${tool(21, ic('fontA'))}${tool(4, c)}</div></div>`, 1) +
  group(198, 'Alignment', `<div class="lines"><div class="tools">${tool(20, ic('top'))}${tool(16, ic('mid'))}${tool(17, ic('bot'), 'hl')}<span style="width:8px"></span>${tool(14, ic('orient'))}${tool(10, c)}${sep(12)}${tool(60, ic('wrap') + 'Wrap Text', 'left')}</div>
    <div class="tools">${tool(20, ic('al'))}${tool(16, ic('ac'))}${tool(17, ic('ar'))}${sep(3)}${tool(22, ic('outdent'))}${tool(14, ic('indent'))}${sep(4)}${tool(86, ic(f.paste ? 'mergeOff' : 'mergeC') + 'Merge &amp; Center', f.paste ? 'left dim' : 'left')}${tool(4, c)}</div></div>`, 1) +
  group(105, 'Number', `<div class="lines"><div class="tools"><span style="width:3px"></span>${combo(98, 'Number format', f.number)}</div>
    <div class="tools">${tool(24, '$', 'money')}${tool(4, c)}${tool(22, '%', 'money')}${tool(12, ',', 'money b')}${sep(4)}${tool(20, ic('decUp'))}${tool(14, ic('decDown'))}</div></div>`, 1) +
  group(136, 'Styles', bigBtn('cond', 54, 'Conditional', 'Formatting~') + bigBtn('fmtTable', 43, 'Format as', 'Table~') + bigBtn('cell', 33, 'Cell', 'Styles~')) +
  group(102, 'Cells', bigBtn('insert', 31, 'Insert', '~') + bigBtn('del', 32, 'Delete', '~') + bigBtn('format', 32, 'Format', '~')) +
  group(140, 'Editing', `<div class="list">${line('sum', 'AutoSum&nbsp;&nbsp;', 1)}${line('down2', 'Fill', 1)}${line('erase', 'Clear', 1)}</div><span style="width:6px"></span>` + bigBtn('sort', 32, 'Sort &amp;', 'Filter~') + bigBtn('find', 32, 'Find &amp;', 'Select~'));

const powerPivot = () =>
  group(50, 'Data Model', bigBtn('manage', 42, 'Manage')) +
  group(84, 'Calculations', bigBtn('calc', 46, 'Calculated', 'Fields~') + bigBtn('kpi', 32, 'KPIs', '~')) +
  group(100, 'Slicer Alignment', `<div class="list">${line('alignV', 'Align Vertically')}${line('alignH', 'Align Horizontally')}</div>`) +
  group(89, 'Tables', bigBtn('addModel', 50, 'Add to', 'Data Model') + bigBtn('updAll', 32, 'Update', 'All')) +
  group(58, 'Relationships', bigBtn('detect', 40, 'Detect')) +
  group(42, '', bigBtn('settings', 40, 'Settings'));

// Employee records shared by three of the sheets
const people = `E10001|Jennifer|Onslow|12-11-1976|48829294|12-02-2010|D109|Sales
E10003|William|Smith|18-06-1972|86638822|19-08-2013|D103|HR
E10004|Marie|Potter|17-02-1971|67388424|02-11-2013|D103|HR
E10005|Michele|Jones|27-01-1977|77340982|21-10-2010|D110|Software
E10006|Paul|Baker|18-03-1986|66388464|25-04-2013|D109|Sales
E10007|Harry|Parker|16-03-1974|55475630|31-01-2010|D103|HR
E10008|Paula|Harris|02-09-1987|60252563|30-05-2013|D104|LnD
E10009|Jack|Ford|22-07-1980|56375062|02-02-2013|D109|Sales
E10010|Richard|Parker|27-06-1971|54346746|06-11-2013|D104|LnD
E10011|Veronica|Smith|16-03-1977|95594464|16-03-2012|D103|HR
E10012|Katie|Jones|23-04-1978|63564263|17-06-2013|D105|Maintenance
E10014|Bruce|Adamson|30-03-1977|94202219|25-09-2011|D102|HouseKeeping
E10015|James|Walker|11-04-1972|65069375|14-10-2012|D110|Software
E10017|Maria|Perez|17-03-1988|50643018|24-09-2013|D110|Software
E10019|Eva|Pulaski|02-11-1988|78123290|25-03-2010|D110|Software
E10020|Daniel|Smith|08-02-1988|46568316|18-07-2011|D110|Software
E10021|Wing|Lee|02-04-1979|82713505|23-12-2011|D110|Software
E10023|Jason|Gounot|17-08-1983|50303048|11-05-2012|D106|Operations
E10024|Greg|Orlando|22-09-1972|75668741|16-12-2011|D107|Planning
E10025|Sally|Kwan|10-09-1973|71511797|30-08-2010|D107|Planning
E10027|John|Spenser|22-12-1974|58390470|06-08-2012|D101|Delivery
E10028|David|Brown|24-09-1982|93375784|15-09-2010|D106|Operations
E10029|Jennifer|Lutz|31-01-1970|61247809|09-11-2012|D104|LnD
E10030|Helena|Wong|01-08-1977|45124651|17-03-2010|D106|Operations`.split('\n').map(r => r.split('|'));
const cities = `Kadapa|341823|Andhra Pradesh
Kamarhati|336579|West Bengal
Bilaspur|330106|Chhattisgarh
Shahjahanpur|327975|Uttar Pradesh
Bijapur|326360|Karnataka
Rampur|325248|Uttar Pradesh
Shivamogga (Shimoga)|322428|Karnataka
Chandrapur|321036|Maharashtra
Junagadh|320250|Gujarat
Thrissur|315596|Kerala
Alwar|315310|Rajasthan
Bardhaman|314638|West Bengal
Kulti|313977|West Bengal
Kakinada|312255|Andhra Pradesh
Nizamabad|310467|Andhra Pradesh
Parbhani|307191|Maharashtra
Tumkur|305821|Karnataka
Hisar|301249|Haryana
Ozhukarai|300028|Puducherry
Bihar Sharif|296889|Bihar
Panipat|294150|Haryana
Darbhanga|294116|Bihar
Bally|291972|West Bengal
Aizawl|291822|Mizoram`.split('\n').map(r => r.split('|'));

const filter = `<button class="filter" aria-label="Filter">${c}</button>`;
const cols = ws => `<colgroup>${ws.map(w => `<col${w ? ` style="width:${w}px"` : ''}>`).join('')}</colgroup>`;
const corner = `<th class="corner">${ic('corner')}</th>`;
const empty = n => '<td></td>'.repeat(n);

const stdGrid = () => {
  const heads = ['EmpID', 'EmpFirstName', 'EmpLastName', 'EmpDOB', 'EmpContactNum', 'EmpHireDate', 'DeptID'];
  const rows = people.slice(0, 23).map((p, i) => `<tr class="${i % 2 ? '' : 'band'}"><th class="${i === 15 ? 'sel' : ''}">${i + 2}</th>${p.slice(0, 7).map((v, j) => `<td class="t${j > 2 && j < 6 ? ' num' : ''}${j === 6 ? ' last' : ''}${i === 15 && j === 5 ? ' cell-on' : ''}">${v}</td>`).join('')}${empty(4)}</tr>`);
  return `<table class="std">${cols([19, 47, 86, 84, 58, 95, 80, 49, 86, 84, 58, 0])}<thead><tr>${corner}${[...'ABCDEFGHIJ'].map(l => `<th class="${l === 'F' ? 'sel' : ''}">${l}</th>`).join('')}<th></th></tr></thead><tbody><tr><th>1</th>${heads.map(h => `<td class="t head">${h}${filter}</td>`).join('')}${empty(4)}</tr>${rows.join('')}</tbody></table>`;
};
const cityGrid = () => {
  const rows = cities.map((r, i) => `<tr class="${i % 2 ? '' : 'band'}${i ? '' : ' cut'}"><th>${130 + i}</th><td class="t num">${129 + i}</td><td class="t">${r[0]}</td><td class="t num">${r[1]}</td><td class="t last">${r[2]}</td>${empty(3)}</tr>`);
  return `<table class="city">${cols([19, 34, 169, 100, 100, 168, 100, 0])}<thead><tr>${corner}<th>Key${filter}</th><th>City${filter}</th><th class="sel">Population (2011)${filter}</th><th>'State/Territory${filter}</th><th class="mid">E</th><th class="mid">F</th><th class="mid">G</th></tr></thead><tbody>${rows.join('')}</tbody></table>`;
};
const blueGrid = () => {
  const mon = ['Jan', 'Feb', 'Mar', 'Apr', 'May', 'Jun', 'Jul', 'Aug', 'Sep', 'Oct', 'Nov', 'Dec'];
  const short = d => { const [a, b, y] = d.split('-'); return `${+a}-${mon[b - 1]}-${y.slice(2)}`; };
  const heads = ['EmpID', 'EmpFirstName', 'EmpLastName', 'EmpDOB', 'EmpContactNum', 'EmpHireDate', 'DeptID', 'Department', 'City_ID'];
  const tail = i => [...'JKLMNOPQ'].map(l => `<td class="${i === 7 && l === 'K' ? 'cell-on' : ''}"></td>`).join('');
  const rows = people.map((p, i) => {
    const v = [p[0], p[1], p[2], short(p[3]), p[4], short(p[5]), p[6], p[7], i + 1];
    return `<tr class="${i % 2 ? '' : 'band'}"><th class="${i === 5 ? 'sel' : ''}">${i + 2}</th>${v.map(x => `<td class="t">${x}</td>`).join('')}${tail(i + 2)}</tr>`;
  });
  const rest = [26, 27, 28].map(n => `<tr><th>${n}</th>${empty(17)}</tr>`).join('');
  return `<table class="blue">${cols([19, 48, 77, 76, 87, 87, 71, 67, 73, 48, 48, 49, 48, 48, 48, 48, 48, 0])}<thead><tr>${corner}${[...'ABCDEFGHIJKLMNOP'].map(l => `<th class="${l === 'K' ? 'sel' : ''}">${l}</th>`).join('')}<th></th></tr></thead><tbody><tr><th>1</th>${heads.map(h => `<td class="t head">${h}${filter}</td>`).join('')}${tail(1)}</tr>${rows.join('')}${rest}</tbody></table>`;
};

const queries = [['EmployeeProject', 63], ['Employee_Master', 24], ['Departments', 9], ['Projects', 19], ['City_List', 200]];
const pane = (n, on) => `<aside class="pane"><div class="pane-head"><h2>Workbook Queries</h2><div><button aria-label="Pane options">${c}</button><button aria-label="Close pane">${ic('close')}</button></div></div>
  <p class="count">${n} queries</p><ul>${queries.slice(0, n).map(([q, r]) => `<li class="query ${q === on ? 'on' : ''}">${ic('query')}<div class="txt"><a href="#">${q}</a><p>${r} rows loaded.</p></div>${q === on ? ic('peek', 'peek') : ''}</li>`).join('')}</ul></aside>`;

const ribbonTabs = [['HOME', 45], ['INSERT', 52], ['PAGE LAYOUT', 78], ['FORMULAS', 70], ['DATA', 43], ['REVIEW', 54], ['VIEW', 42], ['POWER QUERY', 80], ['POWERPIVOT', 76, 'gap'], ['QUERY', 50, 'tool'], ['DESIGN', 50, 'tool']];

const frame = f => `<article class="frame ${f.pane ? '' : 'no-pane'} ${f.tools ? '' : 'no-tools'} ${f.low ? 'low' : ''}">
  <div class="titlebar">
    <div class="qat">${ic('xl', 'ico-xl')}<button aria-label="Save">${ic('save', 'ico-save')}</button><button class="undo" aria-label="Undo">${ic(f.undo)}</button><button aria-label="Redo">${ic('redo')}</button><button class="smile" aria-label="Send a smile">${ic('smile')}</button>${ic('more')}</div>
    <div class="doc-title">${f.title} - Excel</div>${f.tools ? '<div class="tools-title">TABLE TOOLS</div>' : ''}
    <div class="win"><button aria-label="Help">${ic('help')}</button><button aria-label="Ribbon display">${ic('full')}</button><button aria-label="Minimize">${ic('min')}</button><button aria-label="Restore">${ic('max')}</button><button aria-label="Close">${ic('close')}</button></div>
  </div>
  <nav class="tabs"><button class="tab file" style="width:44px">FILE</button>${ribbonTabs.filter(t => f.tools || t[2] !== 'tool').map(([t, w, k = '']) => `<button class="tab ${k} ${t === f.tab ? 'active' : ''}" style="width:${w}px">${t}</button>`).join('')}<div class="user">GreyCampus edutech${ic('avatar')}</div></nav>
  <div class="ribbon">${f.ribbon(f)}<button class="collapse" aria-label="Collapse ribbon">${ic('up')}</button></div>
  <div class="fbar"><div class="box namebox"><input aria-label="Name box" value="${f.name}">${c}</div><span class="grip">${ic('dots')}</span><div class="box fx">${ic('cancel')}${ic('check')}<span class="i">fx</span></div><div class="box formula"><input aria-label="Formula" value="${f.value}">${ic('down')}</div></div>
  <div class="work"><div class="sheet"><div class="view"><div class="grid">${f.grid()}</div><div class="vscroll"><button aria-label="Scroll up">${ic('caretUp')}</button><div class="vtrack"><span class="vthumb"></span></div><button aria-label="Scroll down">${c}</button></div></div>
  <div class="sheetbar"><div class="nav">${ic(f.dots ? 'left' : 'leftOff')}${ic('rightOff')}${f.dots ? '<span>...</span>' : ''}</div>${f.sheets.map(([s, w]) => `<button class="stab ${s === f.sheet ? 'on' : ''}" style="width:${w}px">${s}</button>`).join('')}<button class="plus" aria-label="New sheet">${ic('add')}</button><div class="hscroll"><span class="grip">${ic('dots')}</span><button aria-label="Scroll left">${ic('left')}</button><div class="htrack"><span class="hthumb"></span></div><button aria-label="Scroll right">${ic('right')}</button></div></div></div>${f.pane ? pane(...f.pane) : ''}</div>
  <footer class="status">READY${ic('rec', 'rec')}<div class="views"><button class="on" aria-label="Normal view">${ic('vGrid')}</button><button aria-label="Page layout view">${ic('vPage')}</button><button aria-label="Page break view">${ic('vBreak')}</button></div><div class="zoom">${ic('minus')}<input type="range" aria-label="Zoom" value="43">${ic('plus')}</div></footer>
  ${f.tip ? `<div class="tip">${f.tip}</div>` : ''}
  <div class="brand">GreyCampus</div><div class="mark">udemy</div><div class="time">${f.time}</div>
  ${f.spot ? `<div class="spot ${f.spot}"></div>${ic(f.pointer, 'pointer ' + f.spot)}` : ''}
</article>`;

const later = [['EmployeeMaster', 95], ['Department', 73], ['Projects', 55], ['City_List', 56]];
document.getElementById('frames').innerHTML = [
  { title: 'New_EmpProject', tools: 1, tab: 'POWER QUERY', ribbon: powerQuery, undo: 'undo', name: 'F17', value: '18-07-2011', grid: stdGrid, pane: [4, 'Employee_Master'], sheets: [['EmployeeProjects', 99], ['EmployeeMaster', 95], ['Department', 74], ['Projects', 54]], sheet: 'EmployeeMaster', time: '00:02:40', spot: 's1', pointer: 'click' },
  { title: 'New_EmpProject', tools: 1, tab: 'HOME', ribbon: home, paste: 1, size: 11, number: 'Date', undo: 'undoOff', name: 'F17', value: '18-07-2011', grid: stdGrid, pane: [5, 'Employee_Master'], sheets: later, sheet: 'EmployeeMaster', dots: 1, time: '00:05:20', spot: 's2', pointer: 'beam' },
  { title: 'New_EmpProject', tools: 1, tab: 'POWERPIVOT', ribbon: powerPivot, undo: 'undo', name: 'C22', value: '1636068', grid: cityGrid, pane: [5, 'City_List'], sheets: later, sheet: 'City_List', dots: 1, low: 1, tip: 'Row: 130', time: '00:08:01', spot: 's3', pointer: 'arrow' },
  { title: 'EmployeeProjects', tab: 'HOME', ribbon: home, size: 10, number: 'General', undo: 'undo', name: 'K7', value: '', grid: blueGrid, sheets: [['EmployeeProject', 96], ['MetaData', 63], ['Employee_Master', 99], ['Departments', 78], ['Projects', 54]], sheet: 'Employee_Master', time: '00:10:40' }
].map(frame).join('');
```
